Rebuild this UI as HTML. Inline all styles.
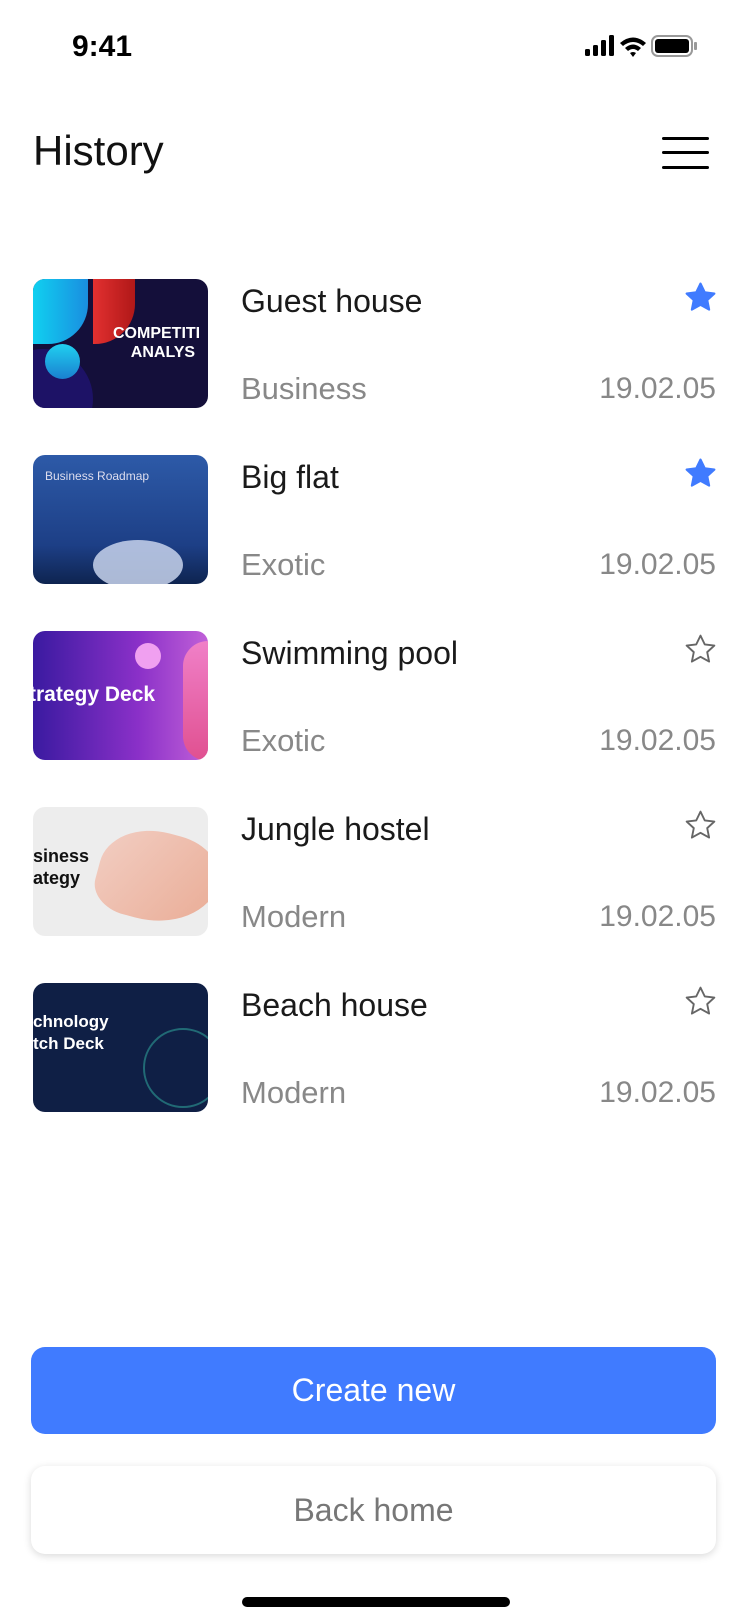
<!DOCTYPE html>
<html><head><meta charset="utf-8"><style>
*{margin:0;padding:0;box-sizing:border-box}
body{width:750px;height:1624px;background:#fff;font-family:"Liberation Sans",sans-serif;position:relative;overflow:hidden}
.abs{position:absolute}
.time{left:72px;top:30px;font-size:30px;font-weight:bold;color:#000}
.title{left:33px;top:127px;font-size:42px;color:#111;font-weight:300}
.ham{left:662px;width:47px;height:3px;background:#000;border-radius:2px}
.thumb{left:33px;width:175px;height:129px;border-radius:12px;overflow:hidden}
.name{left:241px;font-size:32px;color:#1a1a1a}
.sub{left:241px;font-size:31px;color:#888}
.date{right:34px;font-size:30px;color:#888}
.star{left:683px;width:35px;height:35px}
.btn{left:31px;width:685px;border-radius:14px;text-align:center;font-size:32px}
</style></head><body>
<div class="abs time">9:41</div>
<svg class="abs" style="left:585px;top:34px" width="135" height="26" viewBox="0 0 135 26">
<rect x="0" y="15" width="5" height="7" rx="1.5" fill="#000"/><rect x="8" y="11" width="5" height="11" rx="1.5" fill="#000"/><rect x="16" y="6" width="5" height="16" rx="1.5" fill="#000"/><rect x="24" y="1" width="5" height="21" rx="1.5" fill="#000"/>
<path d="M35 9 Q48 -2 61 9 L58 12 Q48 4 38 12Z M40 14 Q48 7 56 14 L53 17 Q48 13 43 17Z M45 19 Q48 17 51 19 L48 23Z" fill="#000"/>
<rect x="67" y="2" width="40" height="20" rx="6" fill="none" stroke="#999" stroke-width="2"/><rect x="70" y="5" width="34" height="14" rx="3" fill="#000"/><rect x="109" y="8" width="3" height="8" rx="1" fill="#999"/>
</svg>
<div class="abs title">History</div>
<div class="abs ham" style="top:137px"></div><div class="abs ham" style="top:151px"></div><div class="abs ham" style="top:166px"></div>

<div class="abs thumb" style="top:279px;background:#140f3a">
 <div class="abs" style="left:0;top:0;width:55px;height:65px;background:linear-gradient(90deg,#10d0f0,#1a8ee0);border-radius:0 0 40px 0"></div>
 <div class="abs" style="left:60px;top:0;width:42px;height:65px;background:linear-gradient(90deg,#e23030,#b01818);border-radius:0 0 40px 0"></div>
 <div class="abs" style="left:-40px;top:70px;width:100px;height:100px;border-radius:50%;background:#1d1266"></div>
 <div class="abs" style="left:12px;top:65px;width:35px;height:35px;border-radius:50%;background:linear-gradient(#20d0f0,#1a80d0)"></div>
 <div class="abs" style="left:80px;top:45px;color:#fff;font-weight:bold;font-size:16px;line-height:19px;white-space:nowrap">COMPETITI<br>&nbsp;&nbsp;&nbsp;&nbsp;ANALYS</div>
</div>
<div class="abs name" style="top:283px">Guest house</div>
<div class="abs sub" style="top:371px">Business</div>
<div class="abs date" style="top:372px">19.02.05</div>

<div class="abs thumb" style="top:455px;background:linear-gradient(180deg,#2d5aa8,#1d3f86 70%,#0e2450)">
 <div class="abs" style="left:12px;top:14px;color:#dde;font-size:12px">Business Roadmap</div>
 <div class="abs" style="left:60px;top:85px;width:90px;height:50px;border-radius:50%;background:#c8d4ec;opacity:.85"></div>
</div>
<div class="abs name" style="top:459px">Big flat</div>
<div class="abs sub" style="top:547px">Exotic</div>
<div class="abs date" style="top:548px">19.02.05</div>

<div class="abs thumb" style="top:631px;background:linear-gradient(90deg,#3a1aa0,#8a30c8 60%,#c060d8)">
 <div class="abs" style="left:150px;top:10px;width:50px;height:120px;border-radius:25px;background:linear-gradient(#f080c8,#e05090)"></div>
 <div class="abs" style="left:102px;top:12px;width:26px;height:26px;border-radius:50%;background:#f0a0f0"></div>
 <div class="abs" style="left:-4px;top:52px;color:#fff;font-weight:bold;font-size:21px;white-space:nowrap">trategy Deck</div>
</div>
<div class="abs name" style="top:635px">Swimming pool</div>
<div class="abs sub" style="top:723px">Exotic</div>
<div class="abs date" style="top:724px">19.02.05</div>

<div class="abs thumb" style="top:807px;background:#ededed">
 <div class="abs" style="left:65px;top:25px;width:120px;height:90px;border-radius:50% 40% 60% 30%;background:linear-gradient(120deg,#f4c0b0,#e89070);opacity:.7;transform:rotate(15deg)"></div>
 <div class="abs" style="left:0;top:38px;color:#111;font-weight:bold;font-size:18px;line-height:22px">siness<br>ategy</div>
</div>
<div class="abs name" style="top:811px">Jungle hostel</div>
<div class="abs sub" style="top:899px">Modern</div>
<div class="abs date" style="top:900px">19.02.05</div>

<div class="abs thumb" style="top:983px;background:#0f1f45">
 <div class="abs" style="left:110px;top:45px;width:80px;height:80px;border-radius:50%;border:2px solid #2a8a8a;opacity:.7"></div>
 <div class="abs" style="left:0;top:28px;color:#fff;font-weight:bold;font-size:17px;line-height:22px">chnology<br>tch Deck</div>
</div>
<div class="abs name" style="top:987px">Beach house</div>
<div class="abs sub" style="top:1075px">Modern</div>
<div class="abs date" style="top:1076px">19.02.05</div>

<svg class="abs star" style="top:280px" viewBox="0 0 24 24"><path d="M12 2.5l2.9 6 6.6.8-4.9 4.5 1.3 6.5L12 17l-5.9 3.3 1.3-6.5L2.5 9.3l6.6-.8z" fill="#407bff" stroke="#407bff" stroke-width="1.5" stroke-linejoin="round"/></svg>
<svg class="abs star" style="top:456px" viewBox="0 0 24 24"><path d="M12 2.5l2.9 6 6.6.8-4.9 4.5 1.3 6.5L12 17l-5.9 3.3 1.3-6.5L2.5 9.3l6.6-.8z" fill="#407bff" stroke="#407bff" stroke-width="1.5" stroke-linejoin="round"/></svg>
<svg class="abs star" style="top:632px" viewBox="0 0 24 24"><path d="M12 2.5l2.9 6 6.6.8-4.9 4.5 1.3 6.5L12 17l-5.9 3.3 1.3-6.5L2.5 9.3l6.6-.8z" fill="none" stroke="#666" stroke-width="1.3" stroke-linejoin="round"/></svg>
<svg class="abs star" style="top:808px" viewBox="0 0 24 24"><path d="M12 2.5l2.9 6 6.6.8-4.9 4.5 1.3 6.5L12 17l-5.9 3.3 1.3-6.5L2.5 9.3l6.6-.8z" fill="none" stroke="#666" stroke-width="1.3" stroke-linejoin="round"/></svg>
<svg class="abs star" style="top:984px" viewBox="0 0 24 24"><path d="M12 2.5l2.9 6 6.6.8-4.9 4.5 1.3 6.5L12 17l-5.9 3.3 1.3-6.5L2.5 9.3l6.6-.8z" fill="none" stroke="#666" stroke-width="1.3" stroke-linejoin="round"/></svg>

<div class="abs btn" style="top:1347px;height:87px;line-height:87px;background:#407bff;color:#fff">Create new</div>
<div class="abs btn" style="top:1466px;height:88px;line-height:88px;background:#fff;color:#777;box-shadow:0 2px 8px rgba(0,0,0,.15)">Back home</div>
<div class="abs" style="left:242px;top:1597px;width:268px;height:10px;border-radius:5px;background:#000"></div>
</body></html>
